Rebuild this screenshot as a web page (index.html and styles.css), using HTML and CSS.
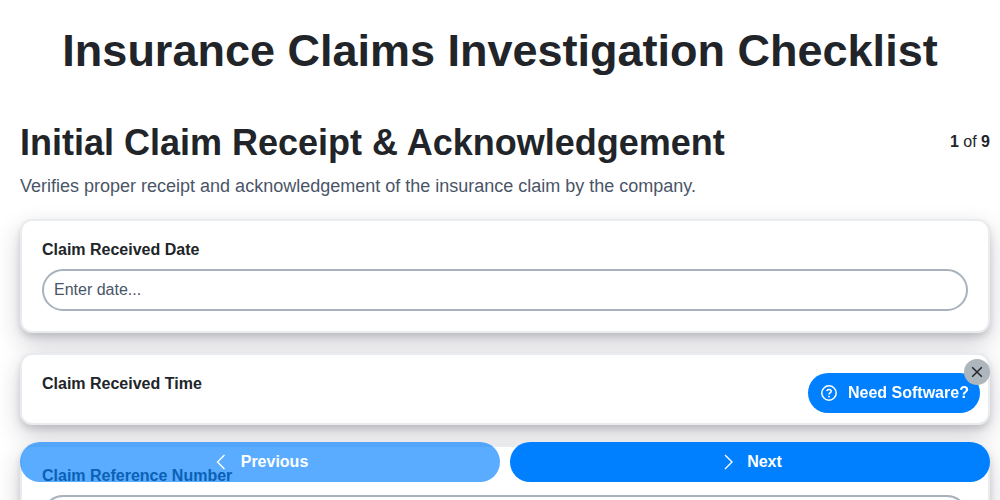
FILE: index.html
```html
<!DOCTYPE html>
<html lang="en">
<head>
<meta charset="utf-8">
<title>Insurance Claims Investigation Checklist</title>
<link rel="stylesheet" href="styles.css">
</head>
<body>
<main class="page">
  <h1 class="title">Insurance Claims Investigation Checklist</h1>
  <div class="content">
    <header class="section-head">
      <h2 class="section-title">Initial Claim Receipt &amp; Acknowledgement</h2>
      <div class="progress"><b>1</b> of <b>9</b></div>
    </header>
    <p class="section-desc">Verifies proper receipt and acknowledgement of the insurance claim by the company.</p>
    <section class="card">
      <label class="field-label">Claim Received Date</label>
      <div class="input">Enter date...</div>
    </section>
    <section class="card">
      <label class="field-label">Claim Received Time</label>
    </section>
    <section class="card">
      <label class="field-label">Claim Reference Number</label>
      <div class="input"></div>
    </section>
  </div>
</main>
<nav class="nav">
  <button class="nav-btn nav-prev">
    <svg class="chev" viewBox="0 0 16 16"><path d="M12.5 1 5.5 8l7 7"/></svg>
    <span>Previous</span>
  </button>
  <button class="nav-btn">
    <svg class="chev" viewBox="0 0 16 16"><path d="m7 1 7 7-7 7"/></svg>
    <span>Next</span>
  </button>
</nav>
<aside class="promo">
  <button class="promo-btn">
    <svg class="help" viewBox="0 0 16 16"><circle cx="8" cy="8" r="7.2"/><path d="M5.8 6.2A2.2 2.2 0 0 1 8 4.4c1.3 0 2.2.8 2.2 1.9 0 1.6-2.2 1.6-2.2 3.2"/><circle class="dot" cx="8" cy="11.6" r=".9"/></svg>
    <span>Need Software?</span>
  </button>
  <button class="promo-close" aria-label="Close">
    <svg viewBox="0 0 16 16"><path d="m2.5 2.5 11 11M13.5 2.5l-11 11"/></svg>
  </button>
</aside>
</body>
</html>
```
FILE: styles.css
```css
* { box-sizing: border-box; }
html, body { height: 100%; overflow: hidden; }
body {
  margin: 0;
  background: #fff;
  color: #212529;
  font-family: "Liberation Sans", Arial, sans-serif;
  font-size: 16px;
}
.page { padding: 21px 10px 0; }
.content { padding-left: 10px; }
.title {
  margin: 0 0 40px;
  text-align: center;
  font-size: 45px;
  line-height: 60px;
  font-weight: 700;
}
.section-head { display: flex; justify-content: space-between; align-items: flex-start; }
.section-title { margin: 0; font-size: 36px; line-height: 43px; font-weight: 700; }
.progress { font-size: 16px; line-height: 18px; margin-top: 12px; }
.section-desc { margin: 11px 0 22px; font-size: 18px; line-height: 22px; color: #4a5568; }
.card {
  background: #fff;
  border: 2px solid #e9ecef;
  border-radius: 12px;
  padding: 20px;
  margin-bottom: 20px;
  box-shadow: 0 4px 6px rgba(0, 0, 0, .12), 0 10px 25px rgba(30, 30, 60, .22);
}
.field-label { display: block; font-weight: 700; line-height: 18px; margin-bottom: 10px; }
.input {
  height: 42px;
  border: 2px solid #a8b2bd;
  border-radius: 21px;
  padding: 0 10px;
  line-height: 38px;
  color: #4a5568;
}
.nav {
  position: fixed;
  left: 20px;
  right: 10px;
  bottom: 18px;
  display: flex;
  gap: 10px;
}
.nav-btn {
  flex: 1;
  height: 40px;
  border: 0;
  border-radius: 20px;
  background: #0080ff;
  color: #fff;
  font: 700 16px "Liberation Sans", Arial, sans-serif;
  display: flex;
  align-items: center;
  justify-content: center;
  gap: 13px;
}
.nav-prev { opacity: .65; }
.chev { width: 16px; height: 16px; fill: none; stroke: #fff; stroke-width: 1.4; }
.promo { position: fixed; right: 20px; bottom: 87px; }
.promo-btn {
  height: 40px;
  width: 172px;
  border: 0;
  border-radius: 20px;
  background: #0080ff;
  color: #fff;
  font: 700 16px "Liberation Sans", Arial, sans-serif;
  white-space: nowrap;
  display: flex;
  align-items: center;
  gap: 11px;
  padding: 0 13px;
}
.help { width: 16px; height: 16px; flex: none; fill: none; stroke: #fff; stroke-width: 1.5; }
.help .dot { fill: #fff; stroke: none; }
.promo-close {
  position: absolute;
  top: -14px;
  right: -10px;
  width: 26px;
  height: 26px;
  border: 0;
  border-radius: 50%;
  padding: 6px;
  background: #adb5bd;
  display: flex;
}
.promo-close svg { width: 14px; height: 14px; fill: none; stroke: #212529; stroke-width: 1.7; }
```
